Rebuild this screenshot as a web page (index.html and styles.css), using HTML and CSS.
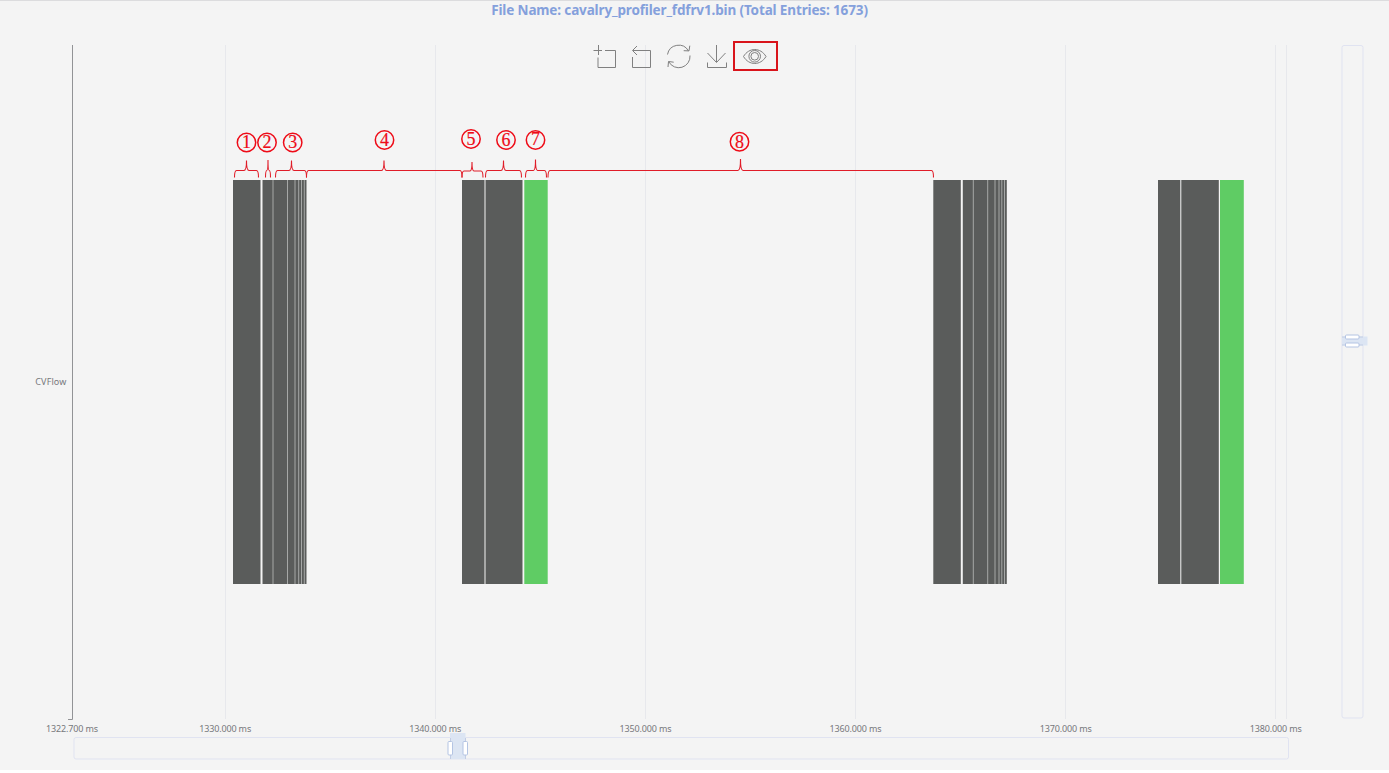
FILE: index.html
```
<!DOCTYPE html>
<html lang="en">
<head>
<meta charset="utf-8">
<title>Cavalry Profiler</title>
<link rel="stylesheet" href="styles.css">
</head>
<body>
<main class="profiler">
<h1 class="title">File Name: cavalry_profiler_fdfrv1.bin (Total Entries: 1673)</h1>
<svg class="chart" viewBox="0 24 1389 746" width="1389" height="746">
  <path class="grid" d="M225.5 45V719M435.5 45V719M645.5 45V719M855.5 45V719M1065.5 45V719M1275.5 45V719M1286.5 45V719"/>
  <path class="axis" d="M72.500 45V719.5H68"/>

  <!-- timeline entries -->
  <g class="bar">
    <path d="M233 180h27.5v404h-27.5zM262.5 180h44v404h-44zM462 180h22.5v404H462zM485.500 180h37v404h-37z"/>
    <path d="M933.300 180h27.500v404h-27.500zM962.800 180h44v404h-44zM1158 180h22.300v404H1158zM1181.300 180h37.500v404h-37.500z"/>
  </g>
  <path class="bar-green" d="M524.300 180h23.400v404h-23.400zM1220 180h23.800v404H1220z"/>
  <path class="split" d="M273 180v404M287.500 180v404M295 180v404M298.700 180v404M301.500 180v404M304.300 180v404M973.300 180v404M987.700 180v404M995 180v404M999 180v404M1001.800 180v404M1004.500 180v404"/>

  <!-- toolbox -->
  <g class="tool">
    <path d="M593.500 50.500h8.500M598.500 45v10M605 50.500h10.500v17h-17.500v-10"/>
    <path d="M637 46l-4.500 4.500 4.500 4.500M633 50.500h17.500v17h-18v-10.500"/>
    <path d="M667.500 54.500a11.300 11.300 0 0 1 21-3.500M683.700 50.700l5.300.2.800-5.200M690 55.500a11.300 11.300 0 0 1-21.200 6.300M668 67l.5-5.500 5.200.7"/>
    <path d="M716.500 45v17M707.500 53l9 9.500 9-9.500M707.500 62.500v5h19v-5"/>
    <path d="M743.500 56.500c5.500-9.300 17-9.300 22.500 0c-5.500 9.300-17 9.300-22.500 0z"/>
    <circle cx="754.700" cy="56.300" r="5.800"/><circle cx="754.700" cy="56.300" r="3.800"/>
  </g>
  <rect class="highlight" x="734" y="42" width="43" height="28"/>

  <!-- braces -->
  <g class="brace">
    <path d="M234.500 177.500q0-7 2-7h7.500q2.500 0 2.500-10q0 10 2.500 10h7.500q2 0 2 7"/>
    <path d="M265.500 177.500q0-7 1.300-7q1.200 0 1.200-10.500q0 10.500 1.200 10.500q1.300 0 1.300 7"/>
    <path d="M275.500 177.500q0-7 2-7h11.500q2.500 0 2.500-10q0 10 2.500 10h10.500q2 0 2 7"/>
    <path d="M306.500 177.500q0-7 2-7h73q2.500 0 2.500-10q0 10 2.500 10h73.500q2 0 2 7"/>
    <path d="M462 177.500q0-6.500 2-6.500h6q2 0 2-9q0 9 2 9h7q2 0 2 6.500"/>
    <path d="M485.500 177.500q0-7 2-7h13.500q2.500 0 2.500-10q0 10 2.500 10h13.500q2 0 2 7"/>
    <path d="M525.500 177.500q0-7 2-7h6q2 0 2-11q0 11 2 11h7q2 0 2 7"/>
    <path d="M548 177.500q0-7 2-7H738q2.500 0 2.500-11.500q0 11.500 2.500 11.500H931.500q2 0 2 7"/>
  </g>
  <g class="ring">
    <circle cx="246.500" cy="142.500" r="9.200"/><circle cx="267" cy="142.500" r="9.200"/><circle cx="292.700" cy="142.500" r="9.200"/><circle cx="384.500" cy="140" r="9.200"/><circle cx="471" cy="139" r="9.200"/><circle cx="506" cy="140" r="9.200"/><circle cx="535.500" cy="140" r="9.200"/><circle cx="739.500" cy="141.800" r="9.200"/>
  </g>
  <g class="digit">
    <text x="246.500" y="148.200">1</text><text x="267" y="148.200">2</text><text x="292.700" y="148.200">3</text><text x="384.500" y="145.700">4</text><text x="471" y="144.700">5</text><text x="506" y="145.700">6</text><text x="535.500" y="145.200">7</text><text x="739.500" y="147.500">8</text>
  </g>

  <!-- zoom sliders -->
  <g class="track">
    <rect x="74" y="737.500" width="1214.500" height="21.500" rx="2"/>
    <rect x="1342" y="45.500" width="21" height="672.500" rx="2"/>
  </g>
  <path class="window" d="M450 733h15.500v26H450zM1342 336.500h25.500v9H1342z"/>
  <path class="window-edge" d="M450.500 738v21M465.500 738v21M1342 337h21M1342 345h21"/>
  <g class="handle">
    <rect x="448" y="741.500" width="4.500" height="13.500" rx="1"/><rect x="463" y="741.500" width="4.500" height="13.500" rx="1"/>
    <rect x="1345.500" y="335" width="13.500" height="4" rx="1"/><rect x="1345.500" y="343" width="13.500" height="4" rx="1"/>
  </g>

  <g class="label">
    <text x="72" y="732" textLength="52">1322.700 ms</text>
    <text x="225.200" y="732" textLength="52">1330.000 ms</text>
    <text x="435.300" y="732" textLength="52">1340.000 ms</text>
    <text x="645.500" y="732" textLength="52">1350.000 ms</text>
    <text x="855.500" y="732" textLength="52">1360.000 ms</text>
    <text x="1065.700" y="732" textLength="52">1370.000 ms</text>
    <text x="1275.800" y="732" textLength="52">1380.000 ms</text>
    <text x="50.800" y="385" textLength="31">CVFlow</text>
  </g>
</svg>
</main>
</body>
</html>
```
FILE: styles.css
```
body { margin: 0; background: #fff; }
.profiler {
  display: flex;
  flex-direction: column;
  width: 1389px;
  height: 770px;
  box-sizing: border-box;
  background: #f4f4f4;
  border-top: 1px solid #dcdcde;
}
.title {
  margin: 0;
  height: 23px;
  padding-right: 30px;
  text-align: center;
  font: bold 13.5px/19px "Noto Sans", "Open Sans", sans-serif;
  letter-spacing: -0.135px;
  color: #84a0dc;
  white-space: nowrap;
}
.chart { display: block; flex: none; }
.chart path, .chart rect, .chart circle { fill: none; }
.grid { stroke: #e7e8ec; }
.axis { stroke: #929396; stroke-width: 1; }
.chart .bar path { fill: #5a5c5b; }
.chart .bar-green { fill: #5fcc64; }
.split { stroke: #a6a8a7; stroke-width: 1; }
.tool { stroke: #808080; stroke-width: 1; }
.highlight { stroke: #d9141b; stroke-width: 2; }
.brace { stroke: #e01c28; stroke-width: 1.1; }
.ring { stroke: #ee0b17; stroke-width: 1.5; }
.digit { font: 18px "Liberation Serif", serif; fill: #ee0b17; stroke: #ee0b17; stroke-width: 0.2; text-anchor: middle; }
.track { stroke: #e0e3f1; }
.chart .window { fill: #dce5f3; }
.window-edge { stroke: #c2cde4; }
.chart .handle rect { fill: #fff; stroke: #b4c4e3; }
.label { font: 9px "Noto Sans", "Open Sans", sans-serif; fill: #77787c; text-anchor: middle; }
```
